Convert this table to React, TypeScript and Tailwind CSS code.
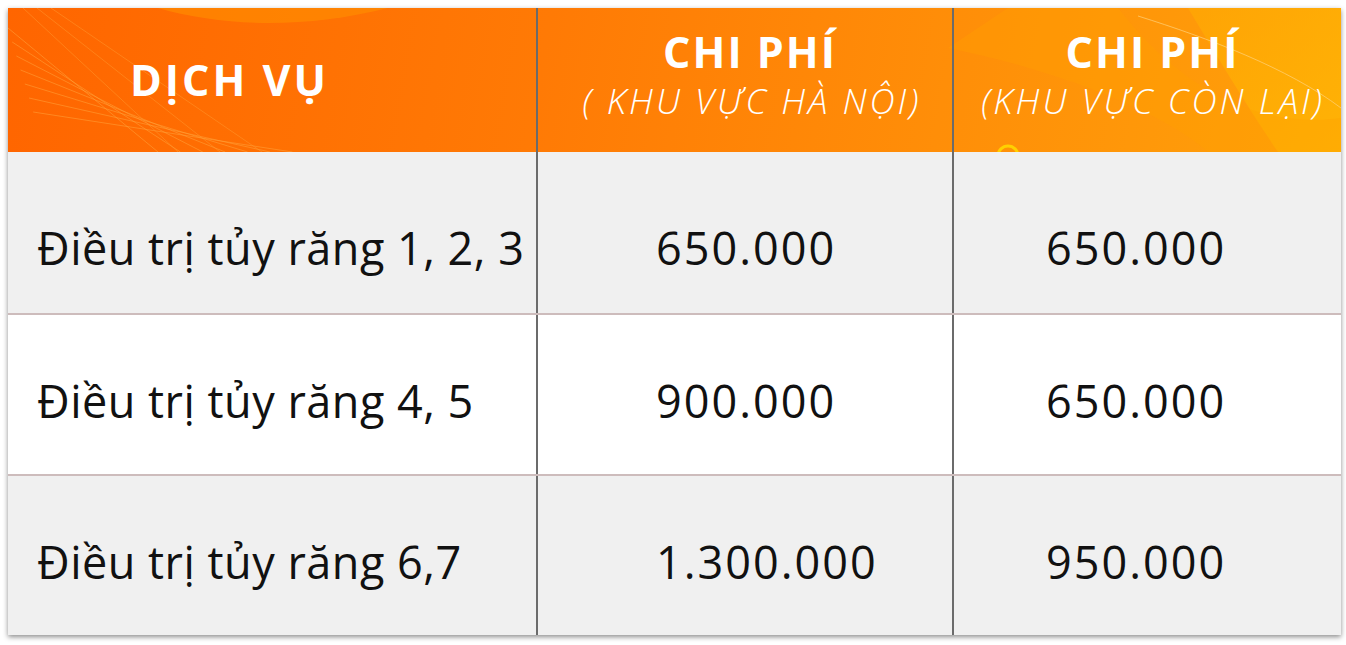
import React from "react";

const rows = [
  { name: "Điều trị tủy răng 1, 2, 3", hn: "650.000", other: "650.000", bg: "bg-[#f0f0f0]", pad: "pt-[30px]" },
  { name: "Điều trị tủy răng 4, 5", hn: "900.000", other: "650.000", bg: "bg-white", pad: "pt-[12px]" },
  { name: "Điều trị tủy răng 6,7", hn: "1.300.000", other: "950.000", bg: "bg-[#f0f0f0]", pad: "pt-[13px]" },
];

function HeaderDecor() {
  return (
    <svg
      className="pointer-events-none absolute inset-0 h-full w-full"
      viewBox="0 0 1333 144"
      preserveAspectRatio="none"
    >
      <defs>
        <linearGradient id="yl" x1="0" y1="0" x2="1" y2="1">
          <stop offset="0" stopColor="#ffb000" stopOpacity="0.85" />
          <stop offset="1" stopColor="#ffc400" stopOpacity="0.9" />
        </linearGradient>
      </defs>
      <path d="M1180 0 C1210 50 1240 100 1270 144 L1333 144 L1333 0 Z" fill="url(#yl)" opacity="0.55" />
      <path d="M940 40 C1040 60 1150 100 1200 144 L1333 144 L1333 110 C1260 120 1180 90 1110 0 L1000 0 Z" fill="#ffa000" opacity="0.35" />
      <path d="M150 0 C220 20 300 20 380 0 Z" fill="#ff9000" opacity="0.6" />
      {[0, 14, 28, 42, 56, 70, 84].map((o) => (
        <path
          key={o}
          d={`M${0 + o * 0.3} ${20 + o} L${150 + o * 1.6} 144`}
          stroke="#ffa23a"
          strokeWidth="1"
          fill="none"
          opacity="0.55"
        />
      ))}
      {[0, 14, 28].map((o) => (
        <path
          key={"t" + o}
          d={`M${15 + o} 0 L${170 + o * 3} 144`}
          stroke="#ff9a30"
          strokeWidth="1"
          fill="none"
          opacity="0.5"
        />
      ))}
      <path d="M1130 8 C1200 30 1280 60 1333 100" stroke="#ffd27a" strokeWidth="1" fill="none" opacity="0.7" />
      <circle cx="1000" cy="148" r="10" stroke="#ffd000" strokeWidth="3" fill="none" />
    </svg>
  );
}

export default function App() {
  return (
    <div className="min-h-[645px] w-[1346px] bg-white pt-2 pl-2 font-['Open_Sans',sans-serif]">
      <div className="w-[1333px] shadow-[0_2px_5px_rgba(0,0,0,0.45)]">
        <div className="relative grid h-[144px] grid-cols-[528px_416px_389px] bg-[linear-gradient(100deg,#ff6500_0%,#ff7a05_40%,#ff8e08_70%,#ffa10a_100%)] text-white">
          <HeaderDecor />
          <div className="relative flex items-center pl-[122px]">
            <span className="text-[43px] font-bold tracking-[3px]">DỊCH VỤ</span>
          </div>
          <div className="relative flex flex-col items-center justify-center border-l-2 border-[#6b6b6b] pb-[12px] leading-none">
            <span className="pl-[10px] text-[43px] font-bold tracking-[2px]">CHI PHÍ</span>
            <span className="mt-[10px] pl-[14px] text-[35px] font-light italic tracking-[3px]">( KHU VỰC HÀ NỘI)</span>
          </div>
          <div className="relative flex flex-col items-center justify-center border-l-2 border-[#6b6b6b] pb-[12px] leading-none">
            <span className="pl-[10px] text-[43px] font-bold tracking-[2px]">CHI PHÍ</span>
            <span className="mt-[10px] pl-[11px] text-[35px] font-light italic tracking-[3px]">(KHU VỰC CÒN LẠI)</span>
          </div>
        </div>
        {rows.map((r, i) => (
          <div
            key={i}
            className={`grid h-[161px] grid-cols-[528px_416px_389px] text-[45px] text-[#111] ${r.bg} ${i > 0 ? "border-t-2 border-[#cdbcbc]" : ""}`}
          >
            <div className={`flex items-center pl-[29px] tracking-[0.5px] ${r.pad}`}>{r.name}</div>
            <div className={`flex items-center border-l-2 border-[#6b6b6b] pl-[118px] tracking-[2px] ${r.pad}`}>{r.hn}</div>
            <div className={`flex items-center border-l-2 border-[#6b6b6b] pl-[92px] tracking-[2px] ${r.pad}`}>{r.other}</div>
          </div>
        ))}
      </div>
    </div>
  );
}
